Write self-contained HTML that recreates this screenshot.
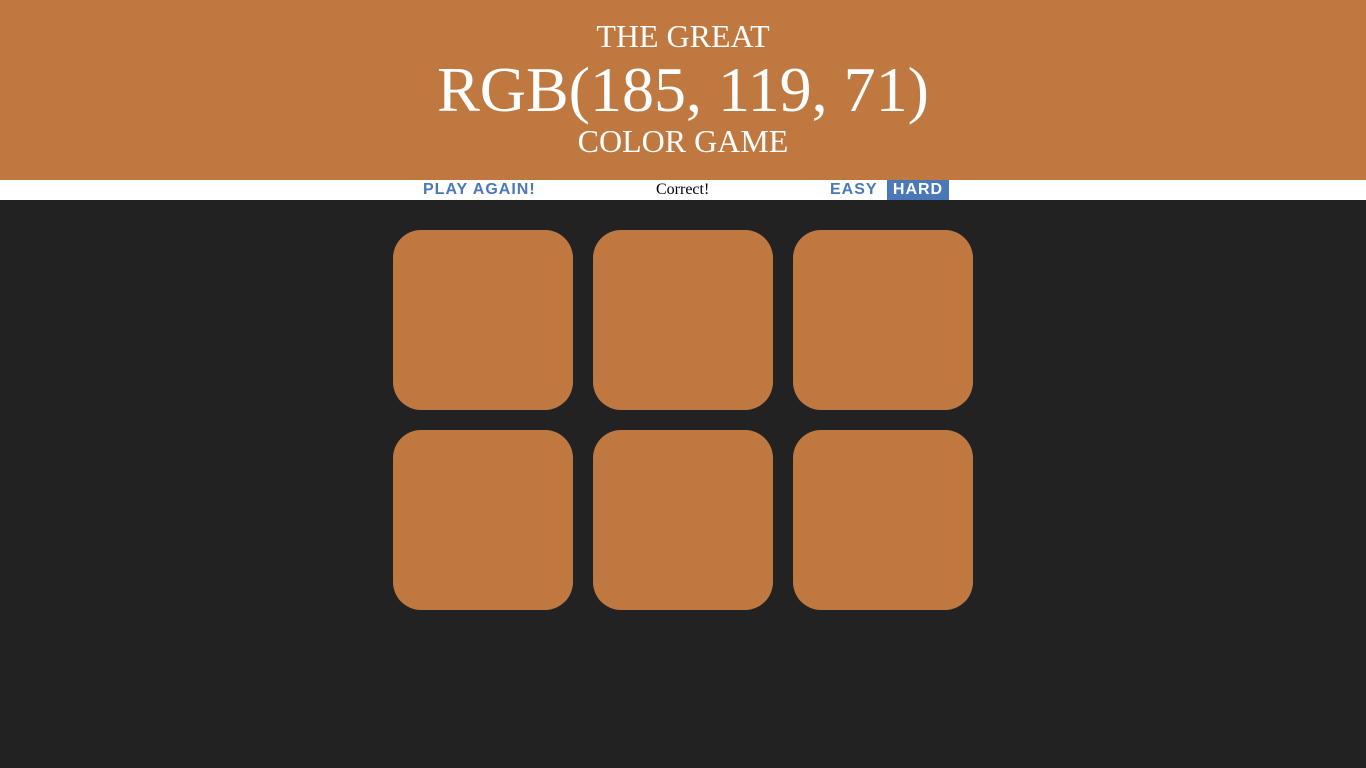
<!DOCTYPE html>
<html><head><style>
body{margin:0;background:#222;font-family:"Liberation Serif",serif;width:1366px;height:768px;overflow:hidden}
h1{margin:0;background:rgb(192,120,65);color:#fff;text-align:center;font-weight:normal;height:180px;position:relative}
h1 .a{position:absolute;left:0;right:0;top:17px;font-size:32px;line-height:38px}
h1 .b{position:absolute;left:0;right:0;top:54px;font-size:64px;line-height:72px}
h1 .c{position:absolute;left:0;right:0;top:122px;font-size:32px;line-height:38px}
.bar{background:#fff;height:20px;position:relative;font-family:"Liberation Sans",sans-serif}
.bar span{position:absolute;top:0;line-height:20px;font-weight:bold;color:#4a78b8;font-size:16px;letter-spacing:1px}
.msg{position:absolute;left:656px;top:0;line-height:20px;font-family:"Liberation Serif",serif;font-size:16px;color:#000}
.sq{position:absolute;width:180px;height:180px;border-radius:28px;background:rgb(192,120,65)}
</style></head><body>
<h1><div class="a">THE GREAT</div><div class="b">RGB(185, 119, 71)</div><div class="c">COLOR GAME</div></h1>
<div class="bar">
<span style="left:423px">PLAY AGAIN!</span>
<div class="msg">Correct!</div>
<span style="left:830px">EASY</span>
<span style="left:887px;width:62px;background:#4a78b8;color:#fff;text-align:center">HARD</span>
</div>
<div class="sq" style="left:393px;top:230px"></div>
<div class="sq" style="left:593px;top:230px"></div>
<div class="sq" style="left:793px;top:230px"></div>
<div class="sq" style="left:393px;top:430px"></div>
<div class="sq" style="left:593px;top:430px"></div>
<div class="sq" style="left:793px;top:430px"></div>
</body></html>
